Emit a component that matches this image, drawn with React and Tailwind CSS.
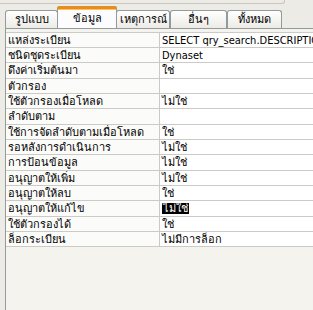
const rows = [
  ['แหล่งระเบียน', 'SELECT qry_search.DESCRIPTIO'],
  ['ชนิดชุดระเบียน', 'Dynaset'],
  ['ดึงค่าเริ่มต้นมา', 'ใช่'],
  ['ตัวกรอง', ''],
  ['ใช้ตัวกรองเมื่อโหลด', 'ไม่ใช่'],
  ['ลำดับตาม', ''],
  ['ใช้การจัดลำดับตามเมื่อโหลด', 'ใช่'],
  ['รอหลังการดำเนินการ', 'ไม่ใช่'],
  ['การป้อนข้อมูล', 'ไม่ใช่'],
  ['อนุญาตให้เพิ่ม', 'ไม่ใช่'],
  ['อนุญาตให้ลบ', 'ใช่'],
  ['อนุญาตให้แก้ไข', 'ไม่ใช่', true],
  ['ใช้ตัวกรองได้', 'ใช่'],
  ['ล็อกระเบียน', 'ไม่มีการล็อก'],
];

const tabs = [
  { label: 'รูปแบบ', w: 'w-[53px]' },
  { label: 'ข้อมูล', w: 'w-[60px]', active: true },
  { label: 'เหตุการณ์', w: 'w-[54px]' },
  { label: 'อื่นๆ', w: 'w-[57px]' },
  { label: 'ทั้งหมด', w: 'w-[55px]' },
];

function Tab({ label, w, active }) {
  if (active) {
    return (
      <div className={`${w} h-[22px] -mx-[1px] relative z-10 bg-[#fcfcfe] border border-b-0 border-[#919b9c] rounded-t-[3px] flex items-center justify-center`}>
        <div className="absolute -top-[1px] -left-[1px] -right-[1px] h-[3px] bg-[#e68b2c] rounded-t-[3px] border-t border-[#e68b2c]" />
        <div className="absolute top-[2px] left-0 right-0 h-[1px] bg-[#ffc73c]" />
        <span className="pt-[2px]">{label}</span>
      </div>
    );
  }
  return (
    <div className={`${w} h-[18px] bg-gradient-to-b from-[#ffffff] to-[#ecebe6] border border-b-0 border-[#919b9c] rounded-t-[3px] flex items-center justify-center`}>
      <span>{label}</span>
    </div>
  );
}

export default function App() {
  return (
    <div className="w-[313px] h-[310px] overflow-hidden bg-[#ecebe5] text-[11px] text-black leading-none font-['DejaVu_Sans_Condensed','DejaVu_Sans',sans-serif]">
      {/* strip above the tabs */}
      <div className="h-[4px] w-[285px] border-b border-r border-[#c7c6c0] rounded-br-[3px]" />

      {/* tab headers */}
      <div className="flex items-end pl-[5px] mt-[2px] h-[22px]">
        {tabs.map(t => <Tab key={t.label} {...t} />)}
      </div>

      {/* tab page */}
      <div className="ml-[5px] h-[300px] bg-[#f4f3ee] border-l border-t border-[#919b9c] pt-[3px]">
        <div className="border-t border-[#cbcac4]">
          {rows.map(([k, v, sel], i) => (
            <div key={k} className={`flex ${i % 3 === 2 ? 'h-[16px]' : 'h-[15px]'} border-b border-[#cbcac4]`}>
              <div className="w-[154px] shrink-0 bg-[#fbfbf9] border-r border-[#cbcac4] pl-[2px] flex items-center whitespace-nowrap overflow-hidden">
                {k}
              </div>
              <div className="flex-1 min-w-0 bg-white pl-[2px] flex items-center whitespace-nowrap overflow-hidden">
                {sel
                  ? <span className="bg-black text-white px-[1px]">{v}</span>
                  : v}
              </div>
            </div>
          ))}
        </div>
      </div>
    </div>
  );
}
